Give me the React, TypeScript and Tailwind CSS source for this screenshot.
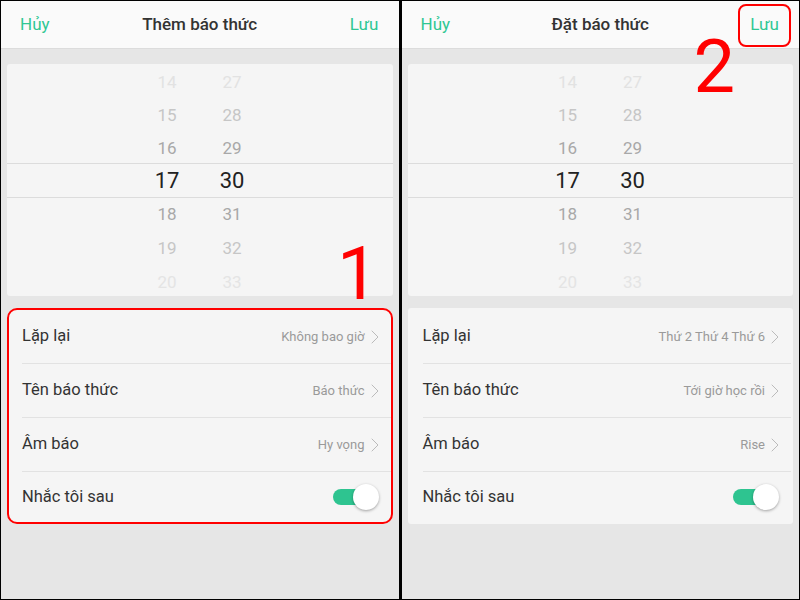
import { ChevronRight } from 'lucide-react'

const hours = [
  { h: '14', m: '27', c: 'text-[#e2e2e2]' },
  { h: '15', m: '28', c: 'text-[#c6c6c6]' },
  { h: '16', m: '29', c: 'text-[#a8a8a8]' },
]
const hoursBelow = [
  { h: '18', m: '31', c: 'text-[#a8a8a8]' },
  { h: '19', m: '32', c: 'text-[#c6c6c6]' },
  { h: '20', m: '33', c: 'text-[#e4e4e4]' },
]

function Picker() {
  return (
    <div className="mx-[6px] mt-[15px] h-[232px] overflow-hidden rounded-[3px] bg-[#f5f5f5]">
      <div className="pt-[2px]">
        {hours.map((r) => (
          <div key={r.h} className={`flex h-[33px] items-center text-[17px] ${r.c}`}>
            <span className="ml-[130px] w-[60px] text-center">{r.h}</span>
            <span className="ml-[5px] w-[60px] text-center">{r.m}</span>
          </div>
        ))}
        <div className="-mt-[2px] flex h-[35px] items-center border-y border-[#dcdcdc] text-[22px] text-[#222]">
          <span className="ml-[130px] w-[60px] text-center">17</span>
          <span className="ml-[5px] w-[60px] text-center">30</span>
        </div>
        {hoursBelow.map((r) => (
          <div key={r.h} className={`flex h-[34px] items-center text-[17px] ${r.c}`}>
            <span className="ml-[130px] w-[60px] text-center">{r.h}</span>
            <span className="ml-[5px] w-[60px] text-center">{r.m}</span>
          </div>
        ))}
      </div>
    </div>
  )
}

function Toggle() {
  return (
    <div className="relative mr-[12px] h-[26px] w-[46px]">
      <div className="absolute left-0 top-[5px] h-[16px] w-[36px] rounded-full bg-[#2ec490]" />
      <div className="absolute right-0 top-0 h-[26px] w-[26px] rounded-full bg-white shadow-[0_1px_3px_rgba(0,0,0,0.35)]" />
    </div>
  )
}

function Settings({ values, boxed }: { values: string[]; boxed?: boolean }) {
  const labels = ['Lặp lại', 'Tên báo thức', 'Âm báo']
  return (
    <div
      className={`mx-[6px] mt-[12px] bg-[#f5f5f5] ${
        boxed ? 'rounded-[10px] border-2 border-[#ff0000]' : 'rounded-[3px] border-2 border-transparent'
      }`}
    >
      {labels.map((l, i) => (
        <div key={l} className="ml-[13px] flex h-[54px] items-center border-b border-[#e2e2e2]">
          <span className="flex-1 text-[16.5px] text-[#333]">{l}</span>
          <span className="text-[13px] text-[#9a9a9a]">{values[i]}</span>
          <ChevronRight className="-ml-[2px] mr-[4px] h-[24px] w-[24px] text-[#bbbbbb]" strokeWidth={1} />
        </div>
      ))}
      <div className="ml-[13px] flex h-[50px] items-center">
        <span className="flex-1 text-[16.5px] text-[#333]">Nhắc tôi sau</span>
        <Toggle />
      </div>
    </div>
  )
}

function Panel({
  title,
  values,
  boxed,
  mark,
  saveBoxed,
}: {
  title: string
  values: string[]
  boxed?: boolean
  mark: string
  saveBoxed?: boolean
}) {
  return (
    <div className="relative flex-1 bg-[#e6e6e6]">
      <div className="flex h-[48px] items-center justify-between border-b border-[#dcdcdc] bg-[#fafafa] pl-[19px] pr-[20px]">
        <span className="text-[17px] text-[#2fc793]">Hủy</span>
        <span className="text-[17px] font-medium text-[#333]">{title}</span>
        <span className="text-[17px] text-[#2fc793]">Lưu</span>
      </div>
      {saveBoxed && (
        <div className="absolute right-[8px] top-[3px] h-[43px] w-[53px] rounded-[8px] border-2 border-[#ff0000]" />
      )}
      <Picker />
      <Settings values={values} boxed={boxed} />
      {mark === '1' ? (
        <span className="absolute left-[336px] top-[236px] text-[74px] leading-none text-[#ff0000]">1</span>
      ) : (
        <span className="absolute left-[292px] top-[29px] text-[74px] leading-none text-[#ff0000]">2</span>
      )}
    </div>
  )
}

export default function App() {
  return (
    <div
      className="flex h-[600px] w-[800px] border border-black bg-black"
      style={{ fontFamily: 'Roboto, "Noto Sans", sans-serif' }}
    >
      <Panel
        title="Thêm báo thức"
        values={['Không bao giờ', 'Báo thức', 'Hy vọng']}
        boxed
        mark="1"
      />
      <div className="w-[3px] bg-black" />
      <Panel
        title="Đặt báo thức"
        values={['Thứ 2 Thứ 4 Thứ 6', 'Tới giờ học rồi', 'Rise']}
        mark="2"
        saveBoxed
      />
    </div>
  )
}
